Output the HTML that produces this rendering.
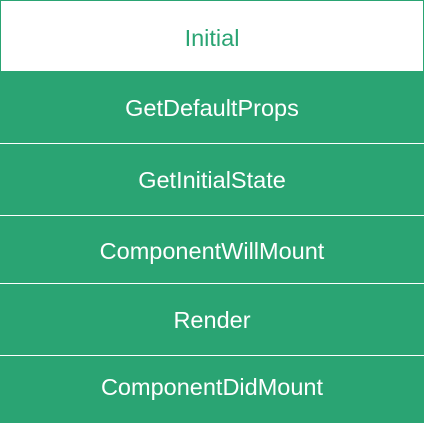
<!DOCTYPE html>
<html><head><style>
html,body{margin:0;padding:0;width:425px;height:423px;background:#fff;overflow:hidden}
.b{position:absolute;left:0;width:424px;display:flex;align-items:center;justify-content:center;font-family:"Liberation Sans",sans-serif;font-size:23.5px;color:#fff;background:#2aa473;padding-top:3px;box-sizing:border-box}
</style></head><body>
<div class="b" style="top:0;height:71px;width:424px;background:#fff;color:#2aa473;border:1px solid #2aa473;border-bottom:none;padding-top:5px">Initial</div>
<div class="b" style="top:71px;height:72px">GetDefaultProps</div>
<div class="b" style="top:144px;height:71px;padding-top:1px">GetInitialState</div>
<div class="b" style="top:216px;height:67px">ComponentWillMount</div>
<div class="b" style="top:284px;height:71px;padding-top:1px">Render</div>
<div class="b" style="top:356px;height:67px;padding-top:0;padding-bottom:4px">ComponentDidMount</div>
</body></html>
